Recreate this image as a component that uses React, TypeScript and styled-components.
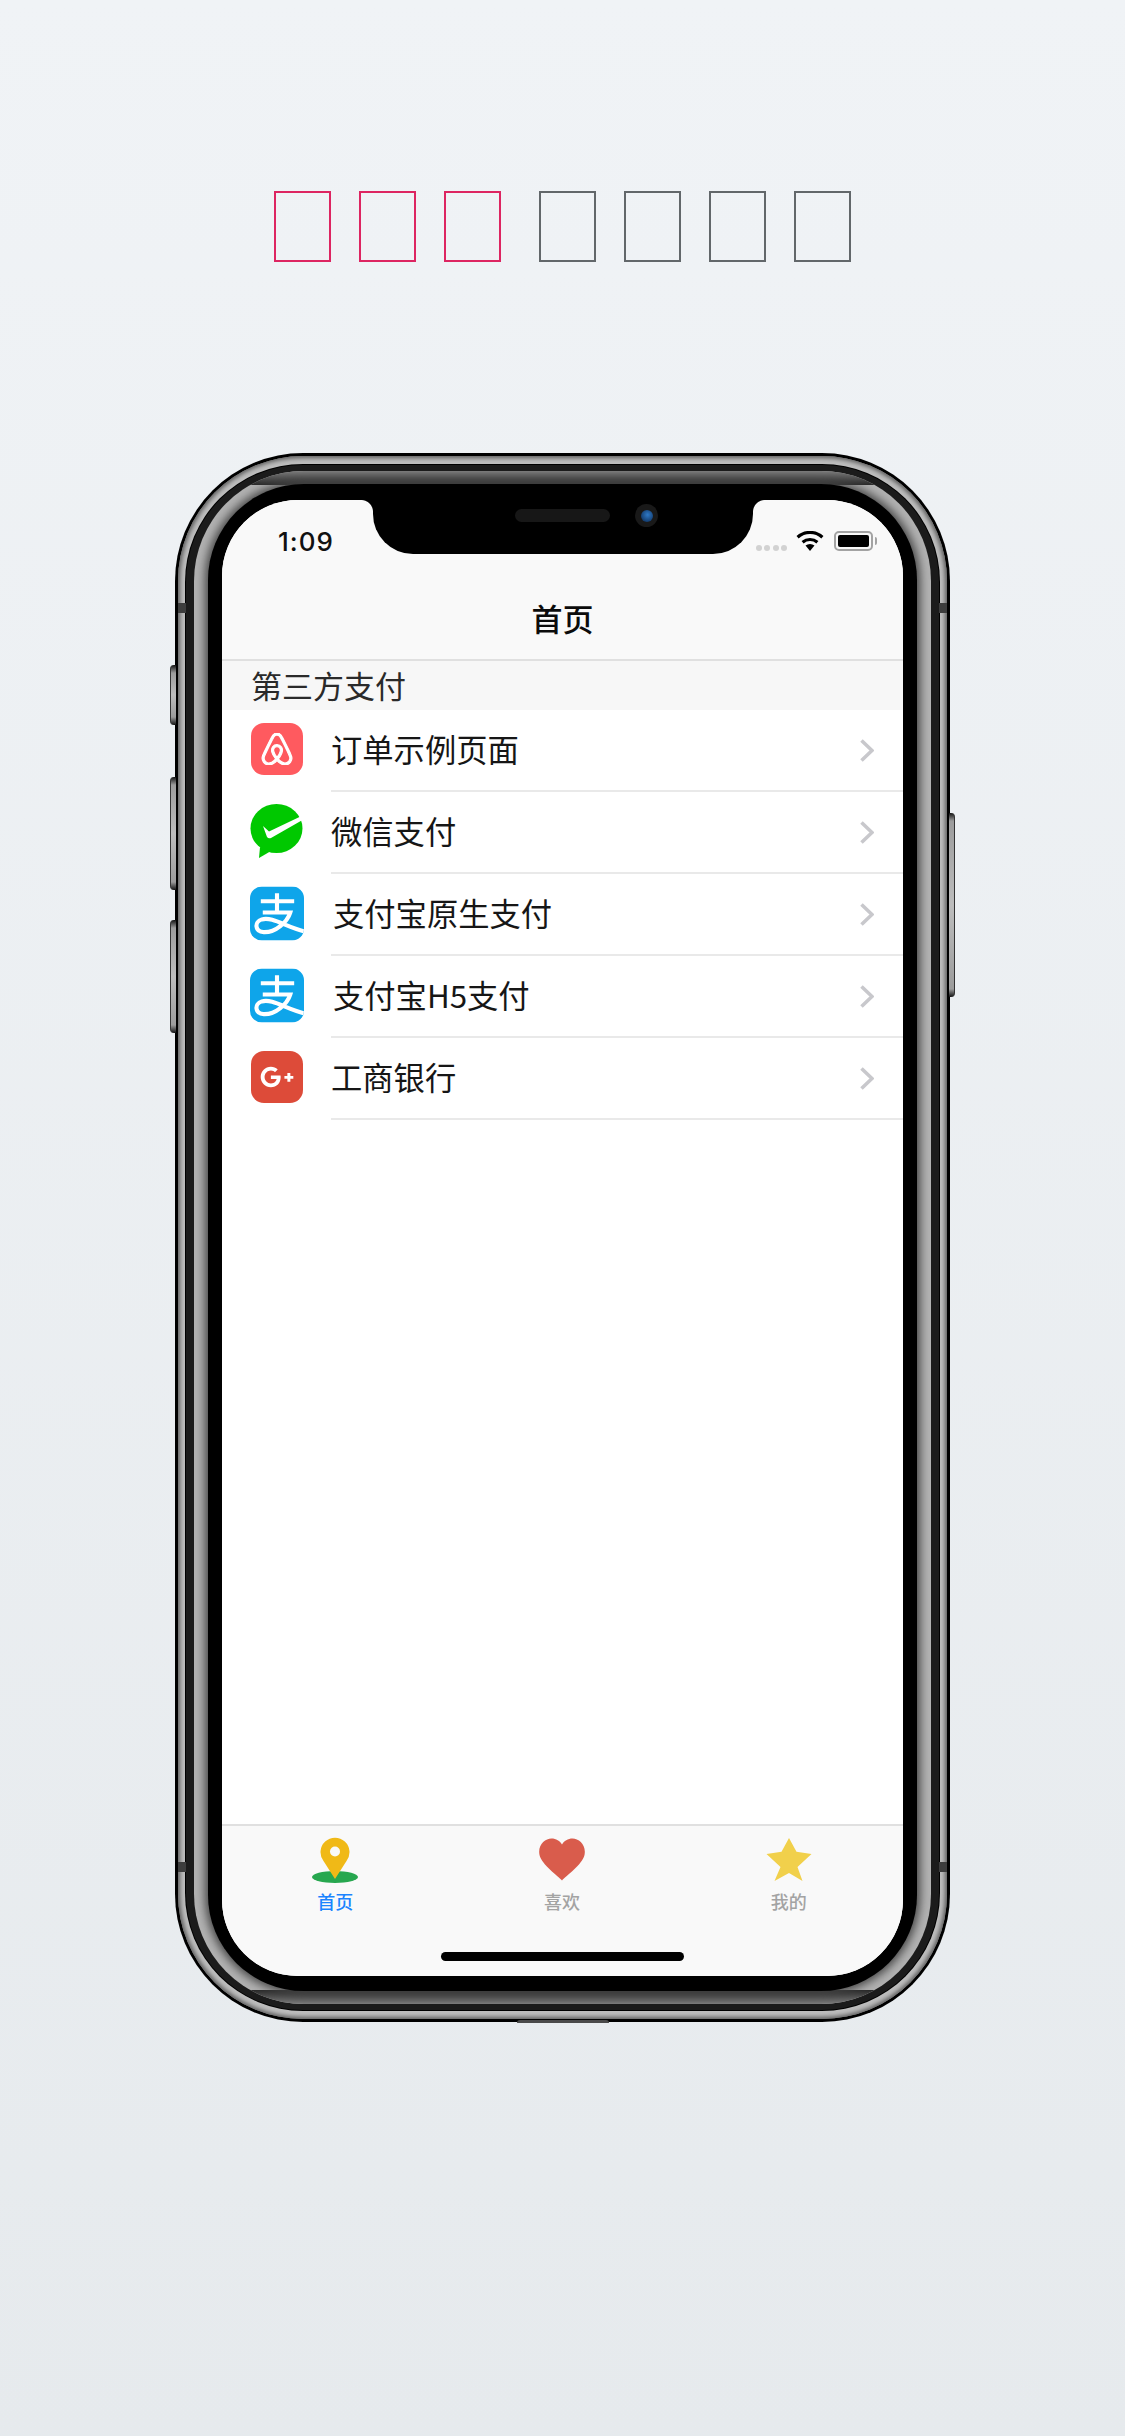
import React from "react";
import styled, { createGlobalStyle } from "styled-components";
import { SiAirbnb } from "react-icons/si";
import { FaGooglePlusG } from "react-icons/fa";

const Global = createGlobalStyle`
  html, body { margin: 0; padding: 0; }
  body { font-family: "Noto Sans CJK SC", "Liberation Sans", sans-serif; }
  #root { width: 1125px; }
`;

const Page = styled.div`
  width: 1125px;
  height: 2436px;
  overflow: hidden;
  background: linear-gradient(180deg, #f0f3f6 0%, #e6eaed 100%);
  display: flex;
  flex-direction: column;
  align-items: center;
  padding-top: 191px;
  box-sizing: border-box;
`;

const Headline = styled.div`
  display: flex;
  gap: 38px;
`;

const HeadlineGroup = styled.div`
  display: flex;
  gap: 28px;
`;

const Tofu = styled.span<{ $accent?: boolean }>`
  display: block;
  width: 57px;
  height: 71px;
  box-sizing: border-box;
  border: 2px solid ${(p) => (p.$accent ? "#dd2561" : "#62676a")};
`;

const Phone = styled.div`
  position: relative;
  margin-top: 191px;
  width: 775px;
  height: 1569px;
  box-sizing: border-box;
  padding: 3px;
  background: #000;
  border-radius: 128px;
`;

const OuterBand = styled.div`
  height: 100%;
  box-sizing: border-box;
  padding: 9px 8px;
  background: #bdbdbd;
  box-shadow: inset 0 0 4px 2px #5c5c5c;
  border-radius: 125px;
`;

const DarkBand = styled.div`
  height: 100%;
  box-sizing: border-box;
  padding: 6px 8px;
  background: #1b1b1b;
  border-radius: 117px;
  box-shadow: 0 0 0 1px #000;
`;

const InnerBand = styled.div`
  position: relative;
  height: 100%;
  box-sizing: border-box;
  padding: 13px 14px;
  background: #b2b2b2;
  border-radius: 110px;
  overflow: hidden;

  &::before,
  &::after {
    content: "";
    position: absolute;
    left: 0;
    right: 0;
    height: 14px;
  }
  &::before {
    top: 0;
    background: linear-gradient(180deg, #7c7c7c, #282828);
    clip-path: polygon(39px 0, calc(100% - 39px) 0, calc(100% - 53px) 100%, 53px 100%);
  }
  &::after {
    bottom: 0;
    background: linear-gradient(0deg, #7c7c7c, #282828);
    clip-path: polygon(53px 0, calc(100% - 53px) 0, calc(100% - 39px) 100%, 39px 100%);
  }
`;

const Bezel = styled.div`
  position: relative;
  z-index: 1;
  height: 100%;
  box-sizing: border-box;
  padding: 16px 14px 15px;
  background: #000;
  border-radius: 96px;
  box-shadow: 0 0 10px 3px #444;
`;

const Screen = styled.div`
  position: relative;
  height: 100%;
  overflow: hidden;
  background: #fff;
  border-radius: 76px;
  display: flex;
  flex-direction: column;
`;

const Notch = styled.div`
  position: absolute;
  top: 0;
  left: 151px;
  width: 380px;
  height: 54px;
  background: #000;
  border-radius: 0 0 40px 40px;

  &::before,
  &::after {
    content: "";
    position: absolute;
    top: 0;
    width: 12px;
    height: 12px;
  }
  &::before {
    left: -12px;
    background: radial-gradient(circle at 0 100%, transparent 11.5px, #000 12.5px);
  }
  &::after {
    right: -12px;
    background: radial-gradient(circle at 100% 100%, transparent 11.5px, #000 12.5px);
  }
`;

const Speaker = styled.div`
  position: absolute;
  left: 142px;
  top: 9px;
  width: 95px;
  height: 13px;
  border-radius: 7px;
  background: #171717;
`;

const Camera = styled.div`
  position: absolute;
  left: 262px;
  top: 4px;
  width: 23px;
  height: 23px;
  border-radius: 50%;
  background: #191919;
  display: flex;
  align-items: center;
  justify-content: center;
  &::after {
    content: "";
    width: 12px;
    height: 12px;
    border-radius: 50%;
    background: radial-gradient(circle at 55% 40%, #2f79c6, #123a6b 75%);
  }
`;

const Edge = styled.div<{ $side: "left" | "right"; $top: number; $height: number }>`
  position: absolute;
  ${(p) => p.$side}: -5px;
  top: ${(p) => p.$top}px;
  width: 6px;
  height: ${(p) => p.$height}px;
  box-sizing: border-box;
  border-radius: ${(p) => (p.$side === "left" ? "4px 0 0 4px" : "0 4px 4px 0")};
  background: linear-gradient(180deg, #111 0, #9c9c9c 8px, #bdbdbd 50%, #9c9c9c calc(100% - 8px), #111 100%);
  border-${(p) => p.$side}: 1px solid #333;
`;

const Antenna = styled.div<{ $side: "left" | "right"; $top: number }>`
  position: absolute;
  ${(p) => p.$side}: 3px;
  top: ${(p) => p.$top}px;
  width: 8px;
  height: 10px;
  background: #3d3d3d;
`;

const BottomNub = styled.div`
  position: absolute;
  left: 342px;
  bottom: -1px;
  width: 92px;
  height: 3px;
  border-radius: 3px 3px 0 0;
  background: #4a4a4a;
`;

const Header = styled.header`
  background: #f9f9f9;
  height: 161px;
  flex: none;
  box-sizing: border-box;
  border-bottom: 2px solid #e0e0e0;
  display: flex;
  flex-direction: column;
`;

const StatusBar = styled.div`
  height: 54px;
  box-sizing: border-box;
  flex: none;
  display: flex;
  align-items: flex-end;
  justify-content: space-between;
  padding: 0 30px 0 56px;
`;

const Clock = styled.span`
  font: 500 26px/24px Inter, "Liberation Sans", sans-serif;
  color: #111;
  letter-spacing: 1px;
`;

const StatusIcons = styled.div`
  display: flex;
  align-items: flex-end;
  margin-bottom: 3px;
`;

const Dots = styled.div`
  display: flex;
  gap: 2.4px;
  margin-right: 9px;
`;

const Dot = styled.span`
  width: 6px;
  height: 6px;
  border-radius: 50%;
  background: #d2d2d2;
`;

const Battery = styled.div`
  position: relative;
  margin-left: 10px;
  width: 39px;
  height: 20px;
  box-sizing: border-box;
  border: 2px solid #a3a3a3;
  border-radius: 5px;
  padding: 2px;
  &::before {
    content: "";
    display: block;
    height: 100%;
    background: #000;
    border-radius: 2px;
  }
  &::after {
    content: "";
    position: absolute;
    right: -6px;
    top: 4px;
    width: 2px;
    height: 8px;
    background: #a3a3a3;
    border-radius: 0 2px 2px 0;
  }
`;

const NavTitle = styled.h1`
  margin: 0;
  flex: 1;
  display: flex;
  align-items: center;
  justify-content: center;
  font-size: 31px;
  font-weight: 500;
  color: #0b0b0b;
  padding-top: 22px;
`;

const SectionTitle = styled.div`
  height: 49px;
  box-sizing: border-box;
  flex: none;
  background: #f7f7f7;
  display: flex;
  align-items: center;
  padding: 0 0 3px 29px;
  font-size: 31px;
  color: #2a2a2a;
`;

const List = styled.ul`
  list-style: none;
  margin: 0;
  padding: 0;
  flex: 1;
`;

const Row = styled.li`
  height: 82px;
  display: flex;
  align-items: center;
  padding-left: 28px;
`;

const IconSlot = styled.div`
  width: 54px;
  height: 56px;
  flex: none;
  display: flex;
  align-items: center;
  justify-content: center;
  margin-top: -4px;
`;

const SquareIcon = styled.div<{ $bg: string }>`
  width: 52px;
  height: 52px;
  border-radius: 13px;
  background: ${(p) => p.$bg};
  color: #fff;
  display: flex;
  align-items: center;
  justify-content: center;
`;

const RowBody = styled.div`
  flex: 1;
  height: 100%;
  margin-left: 27px;
  box-sizing: border-box;
  border-bottom: 2px solid #e9e9e9;
  display: flex;
  align-items: center;
  justify-content: space-between;
  padding-right: 29px;
`;

const RowLabel = styled.span<{ $shift?: boolean }>`
  font-size: 31.3px;
  color: #161616;
  margin-left: ${(p) => (p.$shift ? 2 : 0)}px;
  margin-bottom: 3px;
`;

const ChevronGlyph = styled.svg`
  display: block;
  width: 14px;
  height: 23px;
  fill: none;
  stroke: #c8c8cc;
  stroke-width: 3.6;
`;

const TabBar = styled.nav`
  height: 152px;
  flex: none;
  box-sizing: border-box;
  background: #f9f9f9;
  border-top: 2px solid #e0e0e0;
  position: relative;
  display: grid;
  grid-template-columns: repeat(3, 1fr);
  padding-right: 1px;
`;

const Tab = styled.div`
  display: flex;
  flex-direction: column;
  align-items: center;
  padding-top: 11px;
`;

const TabLabel = styled.span<{ $active?: boolean }>`
  margin-top: 4px;
  font-size: 18px;
  line-height: 24px;
  font-weight: 500;
  color: ${(p) => (p.$active ? "#1b84ff" : "#a3a3a3")};
`;

const TabGlyph = styled.svg`
  width: 48px;
  height: 48px;
  display: block;
`;

const HomeBar = styled.div`
  position: absolute;
  left: 219px;
  top: 126px;
  width: 243px;
  height: 9px;
  border-radius: 5px;
  background: #000;
`;

const Wifi = () => (
  <svg width="28" height="20" viewBox="0 0 28 20" style={{ display: "block" }}>
    <path d="M14 20 L9.5 14.6 A7 7 0 0 1 18.5 14.6 Z" fill="#000" />
    <path d="M6.6 11.2 A11.5 11.5 0 0 1 21.4 11.2" fill="none" stroke="#000" strokeWidth="3.2" />
    <path d="M1.6 6.2 A18.5 18.5 0 0 1 26.4 6.2" fill="none" stroke="#000" strokeWidth="3.2" />
  </svg>
);

const WeChat = () => (
  <svg width="54" height="54" viewBox="0 0 54 54" style={{ display: "block" }}>
    <ellipse cx="26.5" cy="24.5" rx="26" ry="24.5" fill="#00c800" />
    <path d="M10 43 L9 54 L21 47 Z" fill="#00c800" />
    <path d="M13 22 L19 27.5 L50.5 12.5 L52.5 16 L21 34 Q18.5 35 17 33 Z" fill="#fff" />
  </svg>
);

const Alipay = () => (
  <svg width="55" height="55" viewBox="0 0 55 55" style={{ display: "block" }}>
    <defs>
      <clipPath id="alipay-clip">
        <rect width="55" height="55" rx="12" />
      </clipPath>
    </defs>
    <g clipPath="url(#alipay-clip)">
      <rect width="55" height="55" fill="#0ea5ea" />
      <path
        d="M11 15 H45 M27.5 7 V26.5 M13 26.5 H41 C38 36 26 47 14 46.5 C5 46 4 36 12 33.5 C23 30.5 36 41 56 46"
        fill="none"
        stroke="#fff"
        strokeWidth="4.2"
      />
    </g>
  </svg>
);

const Chevron = () => (
  <ChevronGlyph viewBox="0 0 14 23">
    <path d="M1.5 1.5 L12 11.5 L1.5 21.5" />
  </ChevronGlyph>
);

const Pin = () => (
  <TabGlyph viewBox="0 0 48 48">
    <ellipse cx="24" cy="40" rx="23" ry="6" fill="#27a74f" />
    <path d="M24 42 L12.5 24 A14.5 14.5 0 1 1 35.5 24 Z" fill="#f0b917" />
    <circle cx="24" cy="14.5" r="5" fill="#f9f9f9" />
  </TabGlyph>
);

const Heart = () => (
  <TabGlyph viewBox="0 0 48 48">
    <path d="M24 43.5 C20 39 4 28 1.5 18 C-0.5 8 7 1.5 13.5 1.5 C18 1.5 22 4 24 7.5 C26 4 30 1.5 34.5 1.5 C41 1.5 48.5 8 46.5 18 C44 28 28 39 24 43.5 Z" fill="#d95c4c" />
  </TabGlyph>
);

const Star = () => (
  <TabGlyph viewBox="0 0 48 48">
    <path d="M24 1 L31.5 14.7 L46.5 17 L32.5 30 L37.5 44 L24 36 L9.5 44 L15.5 30 L1.5 17 L16.5 14.7 Z" fill="#f1d04b" />
  </TabGlyph>
);

const rows: { label: string; icon: React.ReactNode; shift?: boolean }[] = [
  {
    label: "订单示例页面",
    icon: (
      <SquareIcon $bg="#ff5a5f">
        <SiAirbnb size={32} stroke="currentColor" strokeWidth={0.9} />
      </SquareIcon>
    ),
  },
  { label: "微信支付", icon: <WeChat /> },
  { label: "支付宝原生支付", icon: <Alipay />, shift: true },
  { label: "支付宝H5支付", icon: <Alipay />, shift: true },
  {
    label: "工商银行",
    icon: (
      <SquareIcon $bg="#dd4b39">
        <FaGooglePlusG size={34} />
      </SquareIcon>
    ),
  },
];

export default function App() {
  return (
    <Page>
      <Global />
      <Headline>
        <HeadlineGroup>
          <Tofu $accent /><Tofu $accent /><Tofu $accent />
        </HeadlineGroup>
        <HeadlineGroup>
          <Tofu /><Tofu /><Tofu /><Tofu />
        </HeadlineGroup>
      </Headline>
      <Phone>
        <Edge $side="left" $top={212} $height={60} />
        <Edge $side="left" $top={324} $height={113} />
        <Edge $side="left" $top={467} $height={113} />
        <Edge $side="right" $top={360} $height={184} />
        <Antenna $side="left" $top={150} />
        <Antenna $side="right" $top={150} />
        <Antenna $side="left" $top={1409} />
        <Antenna $side="right" $top={1409} />
        <BottomNub />
        <OuterBand>
          <DarkBand>
            <InnerBand>
              <Bezel>
                <Screen>
                  <Header>
                    <StatusBar>
                      <Clock>1:09</Clock>
                      <StatusIcons>
                        <Dots><Dot /><Dot /><Dot /><Dot /></Dots>
                        <Wifi />
                        <Battery />
                      </StatusIcons>
                    </StatusBar>
                    <NavTitle>首页</NavTitle>
                  </Header>
                  <SectionTitle>第三方支付</SectionTitle>
                  <List>
                    {rows.map((r) => (
                      <Row key={r.label}>
                        <IconSlot>{r.icon}</IconSlot>
                        <RowBody>
                          <RowLabel $shift={r.shift}>{r.label}</RowLabel>
                          <Chevron />
                        </RowBody>
                      </Row>
                    ))}
                  </List>
                  <TabBar>
                    <Tab><Pin /><TabLabel $active>首页</TabLabel></Tab>
                    <Tab><Heart /><TabLabel>喜欢</TabLabel></Tab>
                    <Tab><Star /><TabLabel>我的</TabLabel></Tab>
                    <HomeBar />
                  </TabBar>
                  <Notch>
                    <Speaker />
                    <Camera />
                  </Notch>
                </Screen>
              </Bezel>
            </InnerBand>
          </DarkBand>
        </OuterBand>
      </Phone>
    </Page>
  );
}
